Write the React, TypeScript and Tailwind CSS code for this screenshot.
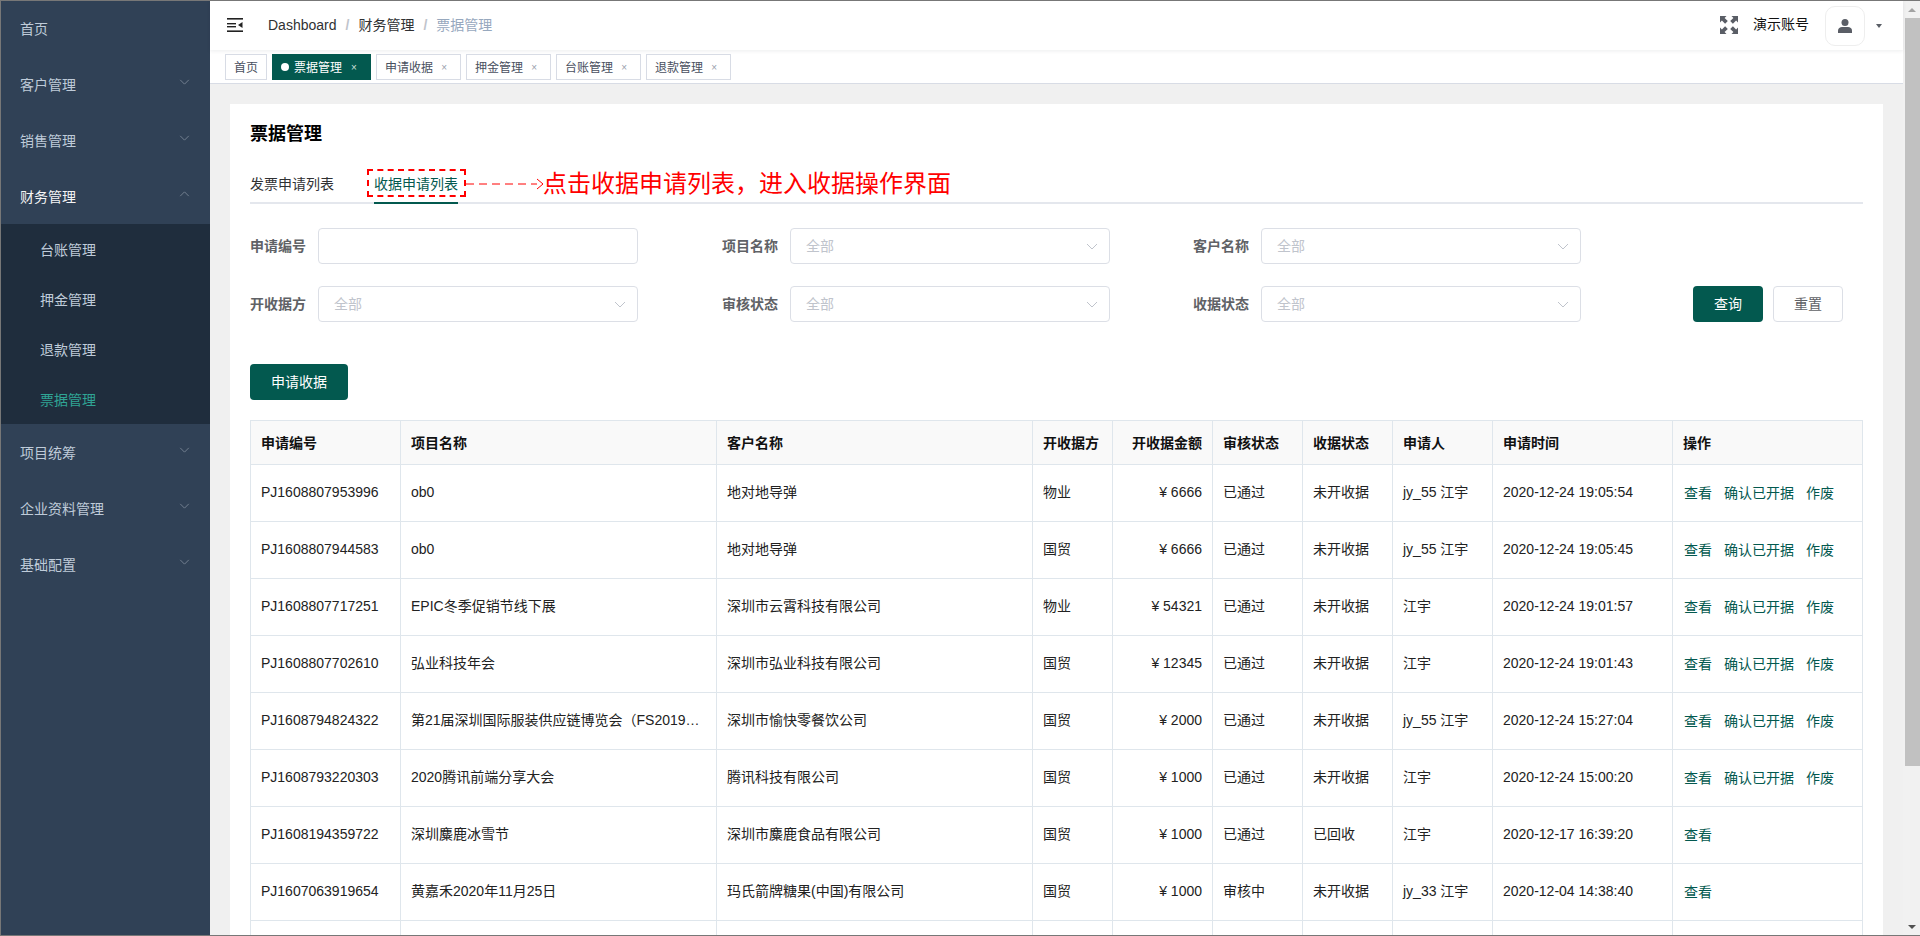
const tags = [
  { label: '票据管理', active: true },
  { label: '申请收据' },
  { label: '押金管理' },
  { label: '台账管理' },
  { label: '退款管理' },
];

const columns = [
  { label: '申请编号', width: 'w-[150px]' },
  { label: '项目名称', width: 'w-[316px]' },
  { label: '客户名称', width: 'w-[316px]' },
  { label: '开收据方', width: 'w-[80px]' },
  { label: '开收据金额', width: 'w-[100px]', right: true },
  { label: '审核状态', width: 'w-[90px]' },
  { label: '收据状态', width: 'w-[90px]' },
  { label: '申请人', width: 'w-[100px]' },
  { label: '申请时间', width: 'w-[180px]' },
  { label: '操作', width: 'w-[190px]' },
];

const rows = [
  ['PJ1608807953996', 'ob0', '地对地导弹', '物业', '6666', '已通过', '未开收据', 'jy_55 江宇', '2020-12-24 19:05:54', true],
  ['PJ1608807944583', 'ob0', '地对地导弹', '国贸', '6666', '已通过', '未开收据', 'jy_55 江宇', '2020-12-24 19:05:45', true],
  ['PJ1608807717251', 'EPIC冬季促销节线下展', '深圳市云霄科技有限公司', '物业', '54321', '已通过', '未开收据', '江宇', '2020-12-24 19:01:57', true],
  ['PJ1608807702610', '弘业科技年会', '深圳市弘业科技有限公司', '国贸', '12345', '已通过', '未开收据', '江宇', '2020-12-24 19:01:43', true],
  ['PJ1608794824322', '第21届深圳国际服装供应链博览会（FS2019秋季）', '深圳市愉快零餐饮公司', '国贸', '2000', '已通过', '未开收据', 'jy_55 江宇', '2020-12-24 15:27:04', true],
  ['PJ1608793220303', '2020腾讯前端分享大会', '腾讯科技有限公司', '国贸', '1000', '已通过', '未开收据', '江宇', '2020-12-24 15:00:20', true],
  ['PJ1608194359722', '深圳麋鹿冰雪节', '深圳市麋鹿食品有限公司', '国贸', '1000', '已通过', '已回收', '江宇', '2020-12-17 16:39:20', false],
  ['PJ1607063919654', '黄嘉禾2020年11月25日', '玛氏箭牌糖果(中国)有限公司', '国贸', '1000', '审核中', '未开收据', 'jy_33 江宇', '2020-12-04 14:38:40', false],
] as const;

const cell = 'border border-[#dfe6ec] px-[10px] pb-[2px]';

const Chevron = ({ up, className }: { up?: boolean; className: string }) => (
  <svg viewBox="0 0 12 7" className={className} fill="none" stroke="currentColor" strokeWidth="1">
    <path d={up ? 'M1 6 6 1l5 5' : 'M1 1l5 5 5-5'} />
  </svg>
);

const MenuItem = ({ label, arrow, up, active, first }: { label: string; arrow?: boolean; up?: boolean; active?: boolean; first?: boolean }) => (
  <div className={`flex items-center justify-between pl-[19px] pr-5 text-sm ${first ? 'h-[55px]' : 'h-14'} ${active ? 'text-[#f4f4f5]' : 'text-[#bfcbd9]'}`}>
    <span className={first ? '' : 'pt-[2px]'}>{label}</span>
    {arrow && <Chevron up={up} className="w-[11px] h-[6px] mb-1 text-[#7d8a99]" />}
  </div>
);

const Field = ({ label, placeholder, arrow = true, width }: { label: string; placeholder?: string; arrow?: boolean; width: string }) => (
  <div className={`${width} flex items-center shrink-0`}>
    <span className="w-[68px] text-sm font-bold text-[#606266]">{label}</span>
    <div className="w-[320px] h-9 border border-[#dcdfe6] rounded bg-white flex items-center justify-between pl-[15px] pr-[11px] text-sm text-[#c0c4cc]">
      <span>{placeholder}</span>
      {arrow && <Chevron className="w-3 h-[7px]" />}
    </div>
  </div>
);

export default function App() {
  return (
    <div className="w-[1920px] h-[936px] overflow-hidden flex border-y border-l border-[#777] bg-[#f0f0f0] text-[#222] font-['Liberation_Sans','Noto_Sans_CJK_SC',sans-serif]">
      {/* Sidebar */}
      <aside className="w-[209px] shrink-0 bg-[#304156]">
        <MenuItem label="首页" first />
        <MenuItem label="客户管理" arrow />
        <MenuItem label="销售管理" arrow />
        <MenuItem label="财务管理" arrow up active />
        <div className="bg-[#1f2d3d]">
          {['台账管理', '押金管理', '退款管理'].map((s) => (
            <div key={s} className="h-[50px] flex items-center pl-[39px] pt-[2px] text-sm text-[#bfcbd9]">{s}</div>
          ))}
          <div className="h-[50px] flex items-center pl-[39px] pt-[2px] text-sm text-[#2fa495]">票据管理</div>
        </div>
        <MenuItem label="项目统筹" arrow />
        <MenuItem label="企业资料管理" arrow />
        <MenuItem label="基础配置" arrow />
      </aside>

      <div className="flex-1 min-w-0 flex flex-col">
        {/* Top bar */}
        <header className="h-[49px] shrink-0 bg-white flex items-center shadow-[0_1px_4px_rgba(0,21,41,0.08)] relative z-10">
          <svg viewBox="0 0 16 14" className="w-4 h-[14px] ml-[17px] mt-[-1px]" fill="#222">
            <rect width="16" height="1.6" />
            <rect y="5" width="9" height="1.4" />
            <rect y="8" width="9" height="1.4" />
            <path d="M15.5 4 11 7l4.500 3z" />
            <rect y="12.400" width="16" height="1.6" />
          </svg>
          <div className="flex items-center ml-[25px] mb-[2px] text-sm text-[#303133]">
            <span>Dashboard</span>
            <span className="mx-[9px] text-[#c0c4cc] font-bold">/</span>
            <span>财务管理</span>
            <span className="mx-[9px] text-[#c0c4cc] font-bold">/</span>
            <span className="text-[#97a8be]">票据管理</span>
          </div>
          <div className="ml-auto flex items-center">
            <svg viewBox="0 0 18 18" className="w-[18px] h-[18px] mb-px" fill="#5a5e66">
              <path d="M0 0h6.500L4.600 1.900 7.800 5.100 5.100 7.800 1.900 4.600 0 6.500z" />
              <path d="M18 0v6.500l-1.900-1.900-3.200 3.200-2.700-2.700 3.200-3.200L11.500 0z" />
              <path d="M0 18v-6.500l1.900 1.900 3.200-3.200 2.700 2.700-3.200 3.200L6.500 18z" />
              <path d="M18 18h-6.500l1.900-1.900-3.200-3.200 2.700-2.700 3.200 3.200 1.900-1.900z" />
            </svg>
            <span className="ml-[15px] text-sm text-[#111] mb-1">演示账号</span>
            <div className="ml-4 w-10 h-10 rounded-[10px] border border-[#eee] flex items-center justify-center">
              <svg viewBox="0 0 14 14" className="w-[14px] h-[14px]" fill="#5a5e66">
                <circle cx="7" cy="3.500" r="3.500" />
                <path d="M0 14v-2.500C0 9.500 2 8 4 8h6c2 0 4 1.500 4 3.500V14z" />
              </svg>
            </div>
            <span className="ml-[11px] mr-[21px] w-0 h-0 border-x-[3.500px] border-x-transparent border-t-[4px] border-t-[#5a5e66]" />
          </div>
        </header>

        {/* Tags */}
        <div className="h-[34px] shrink-0 bg-white border-b border-[#d8dce5] pt-1 pl-[15px] flex gap-[5px]">
          <div className="h-[26px] border border-[#d8dce5] px-2 pt-[2px] flex items-center text-xs text-[#495060]">首页</div>
          {tags.map((t) => (
            <div
              key={t.label}
              className={`h-[26px] border px-2 flex items-center text-xs ${t.active ? 'bg-[#03594f] border-[#03594f] text-white' : 'bg-white border-[#d8dce5] text-[#495060]'}`}
            >
              {t.active && <span className="w-2 h-2 rounded-full bg-white mr-[5px]" />}
              <span className="pt-[2px]">{t.label}</span>
              <span className={`w-4 text-center text-[10px] pt-[2px] ${t.active ? 'ml-1 text-[#cfe0dc]' : 'ml-[3px] text-[#9aa0ac]'}`}>×</span>
            </div>
          ))}
        </div>

        {/* Content */}
        <main className="flex-1 min-h-0 overflow-hidden px-5 pt-5">
          <div className="bg-white p-5 w-[1653px]">
            <h1 className="text-lg leading-5 font-bold text-black mb-5">票据管理</h1>

            <div className="relative h-10 border-b-2 border-[#e4e7ed] w-[1613px] flex gap-10 text-sm">
              <div className="h-10 leading-10 text-[#303133]">发票申请列表</div>
              <div className="h-10 leading-10 text-[#03594f] border-b-2 border-[#03594f]">收据申请列表</div>
              <div className="absolute left-[117px] top-[5px] w-[99px] h-[28px] border-2 border-dashed border-[#f00]" />
              <svg viewBox="0 0 78 12" className="absolute left-[216px] top-[14px] w-[78px] h-3" fill="none" stroke="#f00" strokeWidth="1">
                <path d="M0 6h71" strokeDasharray="8 5" />
                <path d="M71 1l6 5-6 5" />
              </svg>
              <div className="absolute left-[293px] top-0 h-10 leading-10 text-2xl text-[#f00] whitespace-nowrap">点击收据申请列表，进入收据操作界面</div>
            </div>

            {/* Filters */}
            <div className="mt-6 flex">
              <Field width="w-[472px]" label="申请编号" arrow={false} />
              <Field width="w-[471px]" label="项目名称" placeholder="全部" />
              <Field width="w-[388px]" label="客户名称" placeholder="全部" />
            </div>
            <div className="mt-[22px] flex items-center">
              <Field width="w-[472px]" label="开收据方" placeholder="全部" />
              <Field width="w-[471px]" label="审核状态" placeholder="全部" />
              <Field width="w-[388px]" label="收据状态" placeholder="全部" />
              <button className="ml-[112px] w-[70px] h-9 rounded bg-[#03594f] text-white text-sm">查询</button>
              <button className="ml-[10px] w-[70px] h-9 rounded bg-white border border-[#dcdfe6] text-[#606266] text-sm">重置</button>
            </div>

            <button className="mt-[42px] block w-[98px] h-9 rounded bg-[#03594f] text-white text-sm">申请收据</button>

            {/* Table */}
            <table className="mt-5 w-[1612px] table-fixed border-collapse text-sm">
              <colgroup>
                {columns.map((c) => <col key={c.label} className={c.width} />)}
              </colgroup>
              <thead>
                <tr className="h-11 bg-[#f9f9f9]">
                  {columns.map((c) => (
                    <th key={c.label} className={`border border-[#dfe6ec] px-[10px] font-bold text-[#111] ${c.right ? 'text-right' : 'text-left'}`}>{c.label}</th>
                  ))}
                </tr>
              </thead>
              <tbody>
                {rows.map((r) => (
                  <tr key={r[0]} className="h-[57px]">
                    <td className={cell}>{r[0]}</td>
                    <td className={cell}><div className="truncate">{r[1]}</div></td>
                    <td className={cell}>{r[2]}</td>
                    <td className={cell}>{r[3]}</td>
                    <td className={`${cell} text-right`}>¥ {r[4]}</td>
                    <td className={cell}>{r[5]}</td>
                    <td className={cell}>{r[6]}</td>
                    <td className={cell}>{r[7]}</td>
                    <td className={cell}>{r[8]}</td>
                    <td className="border border-[#dfe6ec] pl-[11px] pr-[10px] text-[#03594f]">
                      <div className="flex gap-3">
                        <span>查看</span>
                        {r[9] && <span>确认已开据</span>}
                        {r[9] && <span>作废</span>}
                      </div>
                    </td>
                  </tr>
                ))}
                <tr className="h-[57px]">
                  {columns.map((c) => <td key={c.label} className="border border-[#dfe6ec]" />)}
                </tr>
              </tbody>
            </table>
          </div>
        </main>
      </div>

      {/* Scrollbar */}
      <div className="w-[17px] shrink-0 bg-[#f1f1f1] flex flex-col">
        <div className="h-[17px] flex items-center justify-center">
          <span className="w-0 h-0 border-x-[4px] border-x-transparent border-b-[4px] border-b-[#a3a3a3]" />
        </div>
        <div className="flex-1 min-h-0">
          <div className="ml-[2px] h-[748px] bg-[#c1c1c1]" />
        </div>
        <div className="h-[17px] flex items-center justify-center">
          <span className="w-0 h-0 border-x-[4px] border-x-transparent border-t-[4px] border-t-[#505050]" />
        </div>
      </div>
    </div>
  );
}
